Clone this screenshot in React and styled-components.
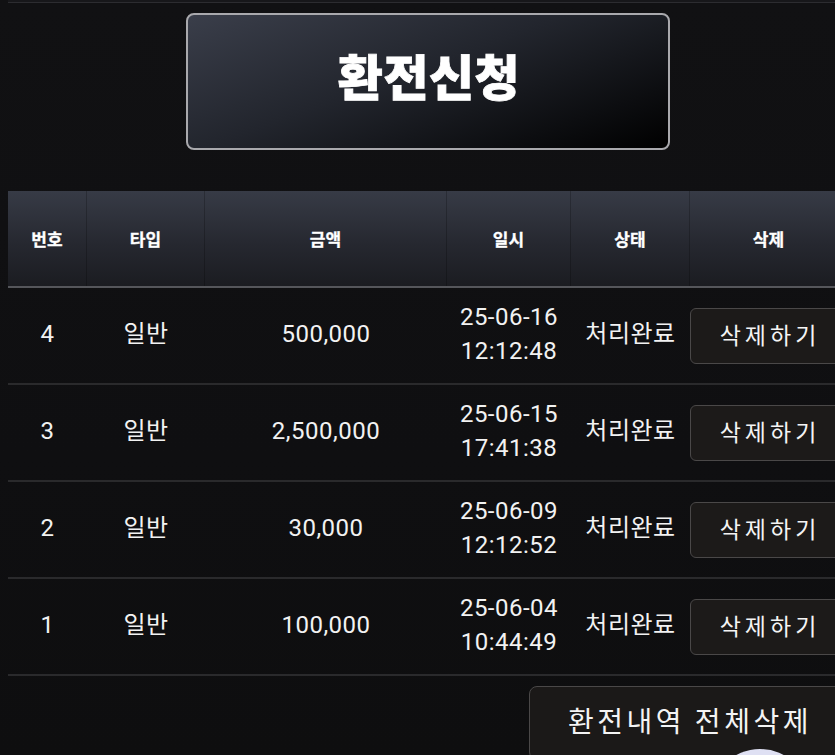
import React from "react"
import styled, { createGlobalStyle } from "styled-components"

const GlobalStyle = createGlobalStyle`
  html, body {
    margin: 0;
    padding: 0;
    overflow: hidden;
    background: #0f0f10;
  }
  body {
    font-family: Roboto, "Noto Sans CJK KR", sans-serif;
    color: #fff;
  }
`

const Page = styled.div`
  position: relative;
  width: 840px;
  min-height: 755px;
  padding: 0 8px;
  background: linear-gradient(180deg, #111113 0%, #0f0f11 60%, #0e0e0f 100%);
`

const TopBar = styled.div`
  height: 2px;
  background: #17171a;
  border-bottom: 1px solid #2c2c30;
`

const TitleBox = styled.div`
  width: 484px;
  height: 137px;
  box-sizing: border-box;
  margin: 10px auto 0;
  display: flex;
  align-items: center;
  justify-content: center;
  border: 2px solid #a9a9ad;
  border-radius: 8px;
  background: linear-gradient(160deg, #3a3e4a 0%, #22252d 45%, #000 100%);
  font-family: "Noto Sans CJK KR", sans-serif;
  font-weight: 900;
  font-size: 49px;
  letter-spacing: 0.5px;
  -webkit-text-stroke: 0.8px #fff;
  padding: 0 0 15px 2px;
`

const Table = styled.div`
  margin-top: 41px;
  width: 840px;
`

const Row = styled.div`
  display: grid;
  grid-template-columns: 79px 118px 242px 124px 119px 158px;
  height: 95px;
  border-bottom: 2px solid ${p => (p.$head ? "#55565b" : "#2a2a2c")};
  background: ${p =>
    p.$head
      ? "linear-gradient(180deg, #373b46 0%, #262830 55%, #1b1c21 100%)"
      : "transparent"};
`

const HeadCell = styled.div`
  display: flex;
  align-items: center;
  justify-content: center;
  border-right: 1px solid rgba(0, 0, 0, 0.22);
  font-family: "Noto Sans CJK KR", sans-serif;
  font-weight: 700;
  font-size: 17px;
  -webkit-text-stroke: 0.3px #fff;
`

const Cell = styled.div`
  display: flex;
  flex-direction: column;
  align-items: ${p => (p.$left ? "flex-start" : "center")};
  justify-content: center;
  font-size: 24px;
  letter-spacing: 0.5px;
  line-height: 34px;
  color: #f2f2f2;
  padding-bottom: 4px;
`

const DeleteButton = styled.button`
  width: 156px;
  height: 56px;
  box-sizing: border-box;
  margin-top: 4px;
  border: 1.5px solid #4a4848;
  border-radius: 6px;
  background: #1c1a19;
  color: #f4f4f4;
  font-family: "Noto Sans CJK KR", sans-serif;
  font-size: 23px;
  letter-spacing: 4px;
  padding: 0 0 4px 4px;
  cursor: pointer;
`

const Footer = styled.div`
  display: flex;
  justify-content: flex-end;
  margin-top: 10px;
`

const ClearAllButton = styled.button`
  width: 319px;
  height: 74px;
  box-sizing: border-box;
  display: flex;
  align-items: flex-start;
  justify-content: center;
  border: 1.5px solid #4a4848;
  border-radius: 8px;
  background: #1b1918;
  color: #f4f4f4;
  font-family: "Noto Sans CJK KR", sans-serif;
  font-size: 28px;
  letter-spacing: 3.5px;
  line-height: 34px;
  padding: 16px 0 0 3px;
`

const FloatingCircle = styled.div`
  position: absolute;
  left: 710px;
  top: 749px;
  width: 100px;
  height: 100px;
  border-radius: 50%;
  background: #dfe0f3;
`

const rows = [
  { no: 4, amount: "500,000", date: "25-06-16", time: "12:12:48" },
  { no: 3, amount: "2,500,000", date: "25-06-15", time: "17:41:38" },
  { no: 2, amount: "30,000", date: "25-06-09", time: "12:12:52" },
  { no: 1, amount: "100,000", date: "25-06-04", time: "10:44:49" },
]

const heads = ["번호", "타입", "금액", "일시", "상태", "삭제"]

const App = () => {
  return (
    <>
      <GlobalStyle />
      <Page>
        <TopBar />
        <TitleBox>환전신청</TitleBox>
        <Table>
          <Row $head>
            {heads.map(h => (
              <HeadCell key={h}>{h}</HeadCell>
            ))}
          </Row>
          {rows.map(r => (
            <Row key={r.no}>
              <Cell>{r.no}</Cell>
              <Cell>일반</Cell>
              <Cell>{r.amount}</Cell>
              <Cell>
                <span>{r.date}</span>
                <span>{r.time}</span>
              </Cell>
              <Cell>처리완료</Cell>
              <Cell $left>
                <DeleteButton>삭제하기</DeleteButton>
              </Cell>
            </Row>
          ))}
        </Table>
        <Footer>
          <ClearAllButton>환전내역 전체삭제</ClearAllButton>
        </Footer>
        <FloatingCircle />
      </Page>
    </>
  )
}

export default App
